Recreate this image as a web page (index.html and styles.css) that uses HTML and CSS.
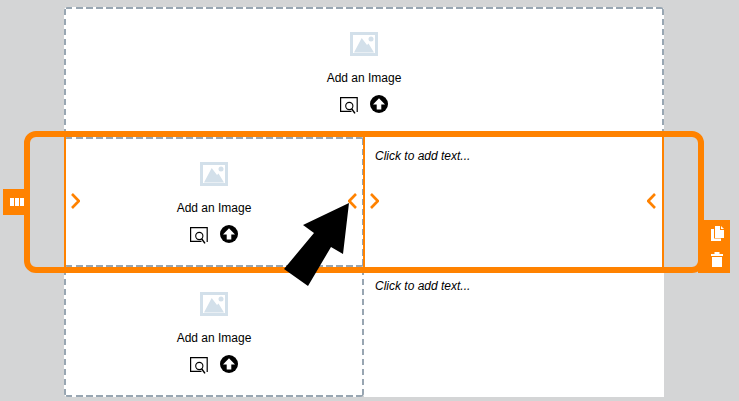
FILE: index.html
```html
<!DOCTYPE html>
<html lang="en">
<head>
<meta charset="utf-8">
<title>Layout editor</title>
<link rel="stylesheet" href="styles.css">
</head>
<body>
<svg width="0" height="0" class="defs" aria-hidden="true">
  <defs>
    <symbol id="pic" viewBox="0 0 28 24">
      <rect x="1.5" y="1.5" width="25" height="21" fill="none" stroke="#d3e0ea" stroke-width="3"/>
      <circle cx="21" cy="7" r="2.5" fill="#d3e0ea"/>
      <path d="M4 20.5 L11.7 6 L17 13 L18.5 11.5 L24 20.5 Z" fill="#d3e0ea"/>
    </symbol>
    <symbol id="lib" viewBox="0 0 18 17">
      <path d="M11.5 14.4 H0.6 V0.6 H17.2 V15" fill="none" stroke="#000" stroke-width="1.2"/>
      <circle cx="9.3" cy="9" r="3.6" fill="none" stroke="#000" stroke-width="1.1"/>
      <path d="M11.6 11.8 L15 16.4" stroke="#000" stroke-width="1.5"/>
    </symbol>
    <symbol id="up" viewBox="0 0 18 18">
      <circle cx="9" cy="9" r="9" fill="#000"/>
      <path d="M9 3.2 L15 9.5 H11.3 V14.6 H6.7 V9.5 H3 Z" fill="#fff"/>
    </symbol>
    <symbol id="next" viewBox="0 0 9 16">
      <path d="M1 1 L7.8 8 L1 15" fill="none" stroke="#ff8200" stroke-width="2.6"/>
    </symbol>
    <symbol id="prev" viewBox="0 0 9 16">
      <path d="M8 1 L1.2 8 L8 15" fill="none" stroke="#ff8200" stroke-width="2.6"/>
    </symbol>
  </defs>
</svg>

<main class="page">
  <section class="cell dashed top-cell">
    <div class="placeholder">
      <svg class="pic"><use href="#pic"/></svg>
      <p class="label">Add an Image</p>
      <div class="actions">
        <svg class="lib"><use href="#lib"/></svg>
        <svg class="up"><use href="#up"/></svg>
      </div>
    </div>
  </section>

  <section class="row active">
    <div class="cell half dashed">
      <div class="placeholder">
        <svg class="pic"><use href="#pic"/></svg>
        <p class="label">Add an Image</p>
        <div class="actions">
          <svg class="lib"><use href="#lib"/></svg>
          <svg class="up"><use href="#up"/></svg>
        </div>
      </div>
      <svg class="chev chev-r"><use href="#next"/></svg>
      <svg class="chev chev-l"><use href="#prev"/></svg>
    </div>
    <div class="cell half text-cell">
      <p class="hint">Click to add text...</p>
      <svg class="chev chev-r"><use href="#next"/></svg>
      <svg class="chev chev-l"><use href="#prev"/></svg>
    </div>

    <div class="frame"></div>
    <div class="tab-left">
      <svg width="14" height="8" viewBox="0 0 14 8"><path d="M0 0h4v8H0zM5 0h4v8H5zM10 0h4v8h-4z" fill="#fff"/></svg>
    </div>
    <div class="tab-right">
      <svg width="13" height="15" viewBox="0 0 13 15"><path d="M4 0h5v4h4v8H4z" fill="#fff"/><path d="M10 0l3 3h-3z" fill="#fff"/><path d="M0 3h3v9.5h7V15H0z" fill="#fff"/></svg>
      <svg width="12" height="15" viewBox="0 0 12 15"><path d="M0 2h3.5V0h5v2H12v2H0zM1 5h10v10H1z" fill="#fff"/></svg>
    </div>
  </section>

  <section class="row">
    <div class="cell half dashed">
      <div class="placeholder">
        <svg class="pic"><use href="#pic"/></svg>
        <p class="label">Add an Image</p>
        <div class="actions">
          <svg class="lib"><use href="#lib"/></svg>
          <svg class="up"><use href="#up"/></svg>
        </div>
      </div>
    </div>
    <div class="cell half text-cell">
      <p class="hint">Click to add text...</p>
    </div>
  </section>

  <svg class="pointer" width="739" height="401" viewBox="0 0 739 401">
    <path d="M349 203 L303 225 L314 233 L284 269 L308 286 L331 247 L343 254 Z" fill="#000"/>
  </svg>
</main>
</body>
</html>
```

FILE: styles.css
```css
* { box-sizing: border-box; }
html, body { margin: 0; height: 100%; overflow: hidden; }
body {
  background: #d4d5d6;
  font-family: "Liberation Sans", Arial, sans-serif;
  color: #000;
}
.defs { position: absolute; }
.page {
  width: 600px;
  height: 390px;
  margin: 7px 0 0 64px;
  display: flex;
  flex-direction: column;
}
.cell { position: relative; background-color: #fff; }
.dashed {
  border-radius: 4px;
  background-image:
    repeating-linear-gradient(90deg, #98a6b2 0 6.5px, transparent 6.5px 10px),
    repeating-linear-gradient(90deg, #98a6b2 0 6.5px, transparent 6.5px 10px),
    repeating-linear-gradient(180deg, #98a6b2 0 6.5px, transparent 6.5px 10px),
    repeating-linear-gradient(180deg, #98a6b2 0 6.5px, transparent 6.5px 10px);
  background-size: 100% 2px, 100% 2px, 2px 100%, 2px 100%;
  background-position: 2px 0, 2px 100%, 0 2px, 100% 2px;
  background-repeat: no-repeat;
}
.top-cell { height: 130px; padding-top: 25px; }
.row { display: flex; position: relative; height: 130px; }
.row.active { z-index: 1; }
.half { width: 300px; height: 130px; padding-top: 25px; }
.text-cell { padding: 12px 10px 0 11px; }
.active .half:first-child::before,
.active .half:nth-child(2)::before,
.active .half:nth-child(2)::after {
  content: "";
  position: absolute;
  top: 0;
  bottom: 0;
  width: 2px;
  background: #ff8200;
}
.active .half:first-child::before { left: 0; }
.active .half:nth-child(2)::before { left: -1px; }
.active .half:nth-child(2)::after { right: 0; }
.placeholder { display: flex; flex-direction: column; align-items: center; }
.pic { width: 28px; height: 24px; display: block; }
.label { margin: 15px 0 0; font-size: 12px; line-height: 14px; }
.actions { display: flex; gap: 12px; align-items: flex-start; margin-top: 10px; }
.lib { width: 18px; height: 17px; display: block; margin-top: 2px; }
.up { width: 18px; height: 18px; display: block; }
.hint { margin: 0; font-size: 12px; line-height: 14px; font-style: italic; }
.chev { position: absolute; width: 9px; height: 16px; top: 56px; }
.half:first-child .chev-r { left: 7px; }
.half:first-child .chev-l { right: 7px; }
.half:nth-child(2) .chev-r { left: 6px; }
.half:nth-child(2) .chev-l { right: 8px; }
.frame {
  position: absolute;
  left: -40px;
  right: -40px;
  top: -6px;
  height: 142px;
  border: 6px solid #ff8200;
  border-radius: 12px;
  pointer-events: none;
}
.tab-left {
  position: absolute;
  left: -61px;
  top: 52px;
  width: 27px;
  height: 26px;
  background: #ff8200;
  display: flex;
  align-items: center;
  justify-content: center;
}
.tab-right {
  position: absolute;
  left: 634px;
  top: 83px;
  width: 32px;
  height: 53px;
  padding: 6px 0 0 13px;
  background: #ff8200;
  display: flex;
  flex-direction: column;
  align-items: flex-start;
  gap: 11px;
}
.pointer { position: absolute; left: 0; top: 0; z-index: 2; pointer-events: none; }
```
